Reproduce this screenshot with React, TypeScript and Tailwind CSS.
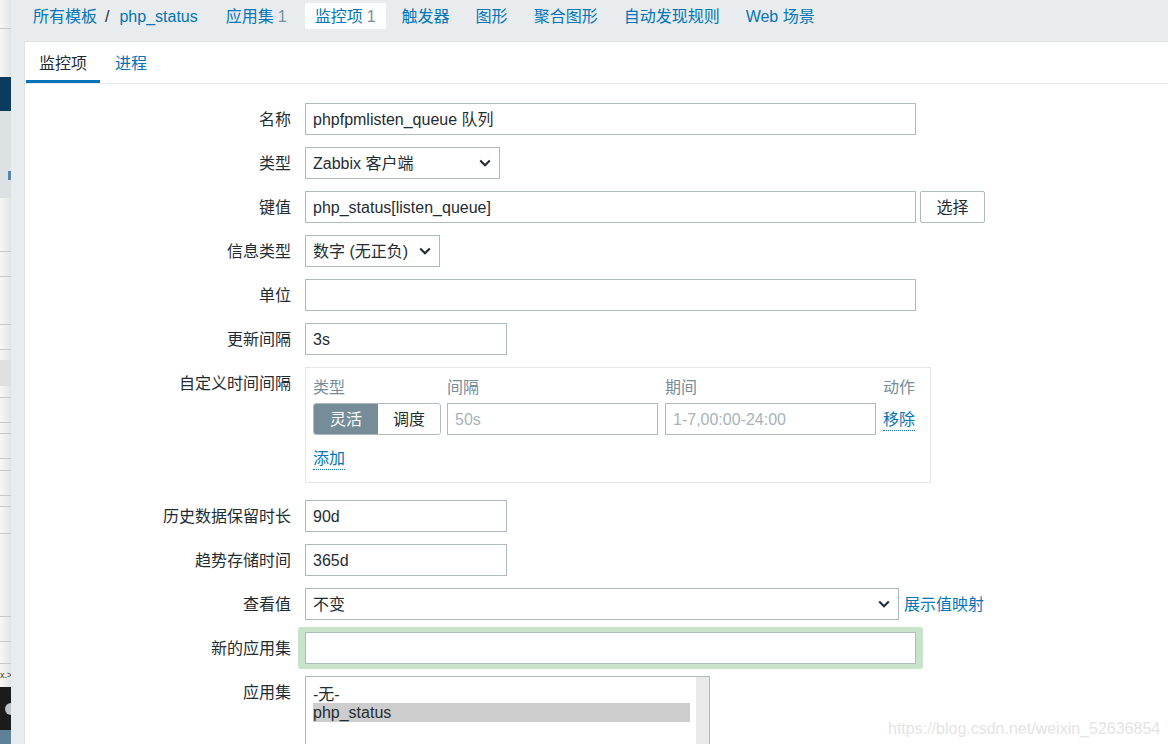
import React from "react";

const Chevron = () => (
  <svg width="12" height="8" viewBox="0 0 12 8" className="shrink-0">
    <path d="M1.2 1.5 L6 6.3 L10.8 1.5" fill="none" stroke="#1f2c33" strokeWidth="2" />
  </svg>
);

const Label = ({ children }: { children: React.ReactNode }) => (
  <div className="w-[266px] h-[32px] shrink-0 flex items-center justify-end pt-[1px] text-[#1f2c33]">{children}</div>
);

const Input = ({ w, value, placeholder }: { w: string; value?: string; placeholder?: string }) => (
  <div className={`${w} h-[32px] border border-[#acbbc2] bg-white flex items-center px-[7px] pt-[1px]`}>
    {value ? <span className="text-[#1f2c33]">{value}</span> : <span className="text-[#a6b3ba]">{placeholder}</span>}
  </div>
);

const Select = ({ w, value }: { w: string; value: string }) => (
  <div className={`${w} h-[32px] border border-[#acbbc2] bg-white flex items-center justify-between pl-[7px] pr-[8px]`}>
    <span className="text-[#1f2c33] whitespace-nowrap pt-[1px]">{value}</span>
    <Chevron />
  </div>
);

const Line = () => <div className="h-[1px] bg-[#c9c9c9] shrink-0" />;
const Sp = ({ h }: { h: string }) => <div className={`${h} shrink-0`} />;

function LeftStrip() {
  return (
    <div className="w-[11px] shrink-0 h-[744px] flex flex-col bg-linear-to-r from-[#f7f7f7] to-[#e3e3e3] overflow-hidden">
      <Sp h="h-[28px]" />
      <Line />
      <Sp h="h-[48px]" />
      <div className="h-[34px] bg-[#0b3b5d] shrink-0" />
      <div className="h-[87px] bg-[#dce1e4] shrink-0 flex flex-col items-end pt-[60px]">
        <div className="w-[3px] h-[9px] bg-[#5a86aa]" />
      </div>
      <Sp h="h-[53px]" />
      <Line />
      <Sp h="h-[24px]" />
      <Line />
      <Sp h="h-[47px]" />
      <Line />
      <Sp h="h-[24px]" />
      <Line />
      <Sp h="h-[10px]" />
      <div className="h-[26px] bg-[#e0e0e0] shrink-0" />
      <Sp h="h-[11px]" />
      <Line />
      <Sp h="h-[24px]" />
      <Line />
      <Sp h="h-[10px]" />
      <Line />
      <Sp h="h-[24px]" />
      <Line />
      <Sp h="h-[11px]" />
      <Line />
      <Sp h="h-[24px]" />
      <Line />
      <Sp h="h-[10px]" />
      <Line />
      <Sp h="h-[26px]" />
      <Line />
      <Sp h="h-[82px]" />
      <Line />
      <Sp h="h-[24px]" />
      <Line />
      <Sp h="h-[21px]" />
      <Line />
      <div className="h-[23px] shrink-0 flex items-center text-[9px] leading-none text-[#333] overflow-hidden whitespace-nowrap">x.&gt;</div>
      <div className="h-[43px] bg-[#1b1b1b] shrink-0 flex items-center justify-end">
        <div className="w-[6px] h-[12px] rounded-l-full bg-[#bfc5c9]" />
      </div>
      <div className="h-[14px] bg-[#5f8198] shrink-0" />
    </div>
  );
}

export default function App() {
  const crumb = "h-[26px] flex items-center pt-[2px] px-[10px] text-[#0275b8] whitespace-nowrap";
  return (
    <div className="relative w-[1168px] h-[744px] overflow-hidden flex bg-[#e8ecef] text-[16px] font-['Liberation_Sans','Noto_Sans_CJK_SC',sans-serif]">
      <LeftStrip />
      <div className="flex-1 flex flex-col min-w-0">
        {/* top breadcrumb bar */}
        <div className="h-[41px] shrink-0 flex items-start pt-[3px] pl-[12px] gap-[6px]">
          <div className={crumb}>
            <span>所有模板</span>
            <span className="ml-[8px] mr-[10px] text-[#1f2c33]">/</span>
            <span>php_status</span>
          </div>
          <div className={`${crumb} ml-[2px]`}>
            应用集 <span className="ml-[4px] text-[#768d99]">1</span>
          </div>
          <div className={`${crumb} ml-[2px] bg-white rounded-[2px]`}>
            监控项 <span className="ml-[4px] text-[#768d99]">1</span>
          </div>
          <div className={crumb}>触发器</div>
          <div className={crumb}>图形</div>
          <div className={crumb}>聚合图形</div>
          <div className={crumb}>自动发现规则</div>
          <div className={crumb}>Web 场景</div>
        </div>

        {/* white panel */}
        <div className="flex-1 ml-[13px] bg-white border-l border-t border-[#dde2e5] flex flex-col min-h-0">
          {/* tabs */}
          <div className="h-[42px] shrink-0 flex items-stretch gap-[2px] pl-[1px] border-b border-[#e6e9eb]">
            <div className="px-[13px] pt-[5px] flex items-center border-b-[3px] border-[#0275b8] text-[#1f2c33]">监控项</div>
            <div className="px-[13px] pt-[5px] flex items-center border-b-[3px] border-transparent text-[#0275b8]">进程</div>
          </div>

          {/* form */}
          <div className="flex flex-col gap-[12px] pt-[19px]">
            <div className="flex gap-[14px]">
              <Label>名称</Label>
              <Input w="w-[611px]" value="phpfpmlisten_queue 队列" />
            </div>
            <div className="flex gap-[14px]">
              <Label>类型</Label>
              <Select w="w-[195px]" value="Zabbix 客户端" />
            </div>
            <div className="flex gap-[14px]">
              <Label>键值</Label>
              <div className="flex gap-[4px]">
                <Input w="w-[611px]" value="php_status[listen_queue]" />
                <div className="w-[65px] h-[32px] border border-[#acbbc2] rounded-[2px] bg-white flex items-center justify-center pt-[1px] text-[#1f2c33]">选择</div>
              </div>
            </div>
            <div className="flex gap-[14px]">
              <Label>信息类型</Label>
              <Select w="w-[135px]" value="数字 (无正负)" />
            </div>
            <div className="flex gap-[14px]">
              <Label>单位</Label>
              <Input w="w-[611px]" />
            </div>
            <div className="flex gap-[14px]">
              <Label>更新间隔</Label>
              <Input w="w-[202px]" value="3s" />
            </div>
            <div className="flex gap-[14px]">
              <Label>自定义时间间隔</Label>
              <div className="w-[626px] border border-[#e4e8ea] pt-[7px] pb-[12px] pl-[7px]">
                <div className="grid grid-cols-[128px_211px_211px_auto] gap-x-[6px]">
                  <div className="h-[24px] flex items-center pt-[1px] text-[#768d99]">类型</div>
                  <div className="h-[24px] flex items-center pt-[1px] text-[#768d99]">间隔</div>
                  <div className="h-[24px] flex items-center pt-[1px] text-[#768d99] ml-[1px]">期间</div>
                  <div className="h-[24px] flex items-center pt-[1px] text-[#768d99] ml-[2px]">动作</div>
                </div>
                <div className="mt-[4px] flex items-center">
                  <div className="w-[128px] h-[32px] flex rounded-[3px] overflow-hidden border border-[#acbbc2]">
                    <div className="w-[64px] bg-[#768d99] text-white flex items-center justify-center pt-[1px]">灵活</div>
                    <div className="flex-1 bg-white text-[#1f2c33] flex items-center justify-center pt-[1px]">调度</div>
                  </div>
                  <div className="ml-[6px]">
                    <Input w="w-[211px]" placeholder="50s" />
                  </div>
                  <div className="ml-[7px]">
                    <Input w="w-[211px]" placeholder="1-7,00:00-24:00" />
                  </div>
                  <div className="ml-[7px] mt-[2px] text-[#0275b8] border-b border-dotted border-[#0275b8] leading-[20px]">移除</div>
                </div>
                <div className="mt-[11px] h-[24px] flex items-center pt-[2px]">
                  <span className="text-[#0275b8] border-b border-dotted border-[#0275b8] leading-[20px]">添加</span>
                </div>
              </div>
            </div>
            <div className="flex gap-[14px] mt-[5px]">
              <Label>历史数据保留时长</Label>
              <Input w="w-[202px]" value="90d" />
            </div>
            <div className="flex gap-[14px]">
              <Label>趋势存储时间</Label>
              <Input w="w-[202px]" value="365d" />
            </div>
            <div className="flex gap-[14px]">
              <Label>查看值</Label>
              <div className="flex items-center gap-[5px]">
                <Select w="w-[594px]" value="不变" />
                <span className="text-[#0275b8] whitespace-nowrap pt-[1px]">展示值映射</span>
              </div>
            </div>
            <div className="flex gap-[14px]">
              <Label>新的应用集</Label>
              <div className="-ml-[7px] -my-[5px] px-[7px] py-[5px] rounded-[3px] bg-[#c7e4ca]">
                <Input w="w-[611px]" />
              </div>
            </div>
            <div className="flex gap-[14px]">
              <Label>应用集</Label>
              <div className="w-[405px] h-[120px] border border-[#acbbc2] bg-white flex">
                <div className="flex-1 pl-[7px] pr-[6px] pt-[7px] text-[#1f2c33]">
                  <div className="h-[19px] leading-[19px] pt-[1px]">-无-</div>
                  <div className="h-[19px] leading-[19px] bg-[#cdcdcd]">php_status</div>
                </div>
                <div className="w-[13px] bg-[#eaeaea]" />
              </div>
            </div>
          </div>
        </div>
      </div>

      <div className="absolute left-[888px] top-[717px] text-[16px] text-[#e4e4e4] whitespace-nowrap">
        https://blog.csdn.net/weixin_52636854
      </div>
    </div>
  );
}
